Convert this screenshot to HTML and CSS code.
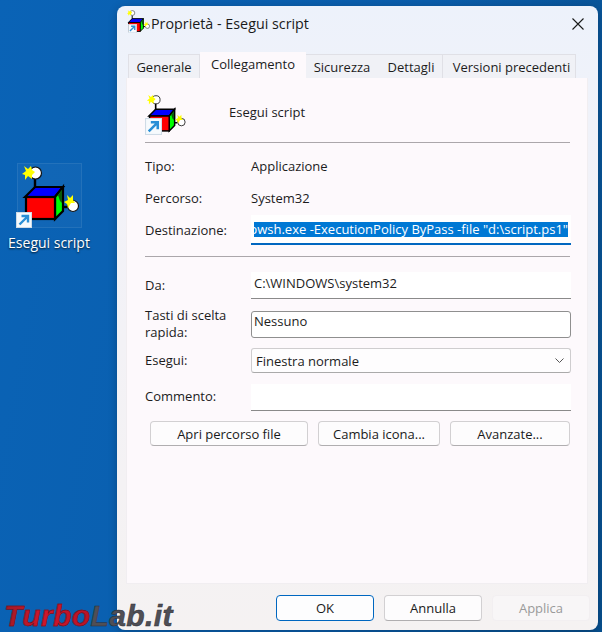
FILE: index.html
```html
<!DOCTYPE html>
<html lang="it">
<head>
<meta charset="utf-8">
<title>Proprietà - Esegui script</title>
<link rel="stylesheet" href="styles.css">
</head>
<body>
<svg class="defs" aria-hidden="true">
  <symbol id="cube" viewBox="0 0 65 65">
    <path d="M18 16V25" stroke="#000" stroke-width="2.4"/>
    <path d="M38 44H50" stroke="#000" stroke-width="2.4"/>
    <polygon points="8,34 18,24 46,24 38,34" fill="#0000ff" stroke="#000" stroke-width="2.2"/>
    <polygon points="38,34 46,24 46,48 38,56" fill="#00ff00" stroke="#000" stroke-width="2.2"/>
    <path d="M41 32L45 27V40L43 38Z" fill="#0a5a0a"/>
    <rect x="9" y="34" width="29" height="22" fill="#ff0000" stroke="#000" stroke-width="2.2"/>
    <circle cx="18.5" cy="10" r="6" fill="#fff" stroke="#111" stroke-width="1.2"/>
    <circle cx="56" cy="43" r="5.5" fill="#fff" stroke="#111" stroke-width="1.2"/>
    <polygon points="7,3 11,6 14,3 15,7 18,9 15,12 15,16 11,13 8,17 8,12 5,11 9,8" fill="#ffff00"/>
    <polygon points="50,32 53,35 56,32 56,37 58,40 54,40 51,45 50,41 47,39 51,37" fill="#ffff00"/>
  </symbol>
  <symbol id="overlay" viewBox="0 0 16 16">
    <rect x="0.5" y="0.5" width="15" height="15" fill="#f6fafd" stroke="#cfdbe6"/>
    <path d="M3.5 12.5L11.5 4.5M5.5 4H12V10.5" fill="none" stroke="#2a8fd6" stroke-width="2.4"/>
  </symbol>
</svg>

<main class="desktop">
  <div class="shortcut">
    <div class="shortcut-frame">
      <svg class="shortcut-icon" viewBox="0 0 65 65">
        <use href="#cube" width="65" height="65"/>
        <use href="#overlay" x="-1" y="49" width="16" height="16"/>
      </svg>
    </div>
    <span class="shortcut-label">Esegui script</span>
  </div>

  <section class="window">
    <header class="titlebar">
      <svg class="title-icon" viewBox="0 0 20 20">
        <use href="#cube" x="-3" y="-5" width="26" height="26"/>
        <use href="#overlay" x="0" y="10" width="9" height="9"/>
      </svg>
      <h1 class="title">Proprietà - Esegui script</h1>
      <svg class="close" viewBox="0 0 12 12"><path d="M0.5 0.5L11.5 11.5M11.5 0.5L0.5 11.5" stroke="#1a1a1a" stroke-width="1.1" fill="none"/></svg>
    </header>

    <nav class="tabs">
      <span class="tab tab-gen">Generale</span>
      <span class="tab tab-active">Collegamento</span>
      <span class="tab tab-sic">Sicurezza</span>
      <span class="tab tab-det">Dettagli</span>
      <span class="tab tab-ver">Versioni precedenti</span>
    </nav>

    <div class="panel">
      <div class="head">
        <svg class="head-icon" viewBox="0 0 40 40">
          <use href="#cube" x="-1.5" y="-1" width="44" height="44"/>
          <use href="#overlay" x="0" y="24" width="17" height="17"/>
        </svg>
        <span class="head-name">Esegui script</span>
      </div>
      <hr class="sep sep-a">
      <div class="row row-info"><span>Tipo:</span><span>Applicazione</span></div>
      <div class="row row-info row-gap"><span>Percorso:</span><span>System32</span></div>
      <div class="row row-dest">
        <span>Destinazione:</span>
        <div class="field field-focus"><div class="clip"><span class="selection">pwsh.exe -ExecutionPolicy ByPass -file "d:\script.ps1"</span></div></div>
      </div>
      <hr class="sep sep-b">
      <div class="row row-da"><span class="label-up">Da:</span><div class="field">C:\WINDOWS\system32</div></div>
      <div class="row row-keys"><span>Tasti di scelta rapida:</span><div class="field field-box">Nessuno</div></div>
      <div class="row row-run">
        <span class="label-up">Esegui:</span>
        <div class="combo"><span>Finestra normale</span>
          <svg class="chevron" viewBox="0 0 9 5"><path d="M0.5 0.5L4.5 4.5L8.5 0.5" fill="none" stroke="#555"/></svg>
        </div>
      </div>
      <div class="row row-com"><span class="label-up2">Commento:</span><div class="field"></div></div>
      <div class="actions">
        <button class="btn">Apri percorso file</button>
        <button class="btn">Cambia icona...</button>
        <button class="btn">Avanzate...</button>
      </div>
    </div>

    <footer class="footer">
      <button class="btn btn-foot btn-primary">OK</button>
      <button class="btn btn-foot">Annulla</button>
      <button class="btn btn-foot btn-disabled">Applica</button>
    </footer>
  </section>

  <div class="watermark"><span class="wm-red">Turbo</span><span class="wm-grey">Lab.it</span></div>
</main>
</body>
</html>
```
FILE: styles.css
```css
* { box-sizing: border-box; }
html, body { margin: 0; padding: 0; }
body { font-family: "Open Sans", "Noto Sans", sans-serif; font-size: 13px; color: #1c1c1c; }
.defs { position: absolute; width: 0; height: 0; }

.desktop {
  position: relative;
  width: 602px;
  height: 632px;
  overflow: hidden;
  background: linear-gradient(100deg, #0a63b6 0%, #0a5dab 60%, #07508f 100%);
}

.shortcut {
  position: absolute;
  left: 0;
  top: 163px;
  width: 98px;
  display: flex;
  flex-direction: column;
  align-items: center;
}
.shortcut-frame {
  width: 65px;
  height: 65px;
  margin-left: 1px;
  background: rgba(255,255,255,.03);
  border: 1px solid rgba(255,255,255,.08);
}
.shortcut-icon { display: block; width: 65px; height: 65px; margin: -1px; overflow: visible; }
.shortcut-label {
  margin-top: 5px;
  color: #fff;
  font-size: 14px;
  line-height: 20px;
  text-shadow: 0 1px 2px rgba(0,0,0,.8);
  white-space: nowrap;
}

.window {
  position: absolute;
  left: 117px;
  top: 6px;
  width: 481px;
  height: 624px;
  border-radius: 8px;
  display: flex;
  flex-direction: column;
  background: linear-gradient(180deg, #edf2fb 0%, #f2f2f8 30%, #f5f2f2 100%);
  box-shadow: 0 2px 8px rgba(0,0,0,.25);
}

.titlebar { height: 46px; flex: none; display: flex; align-items: center; padding: 0 14px 10px 11px; }
.title-icon { width: 20px; height: 20px; overflow: visible; flex: none; }
.title { margin: 0 0 0 3px; font-size: 14.3px; font-weight: 400; line-height: 20px; flex: 1; color: #1a1a1a; }
.close { width: 12px; height: 12px; flex: none; }

.tabs { height: 26px; flex: none; display: flex; align-items: flex-end; margin-left: 11px; }
.tab {
  height: 24px;
  line-height: 24px;
  text-align: center;
  background: #f0f1f6;
  border: 1px solid #e0e0e6;
  border-bottom: 0;
  border-left-color: transparent;
  white-space: nowrap;
}
.tab-gen { width: 72px; border-left-color: #e0e0e6; }
.tab-active {
  width: 106px;
  height: 27px;
  line-height: 25px;
  background: #fdf9fc;
  border: 0;
  position: relative;
  z-index: 1;
  margin-bottom: -1px;
}
.tab-sic { width: 72px; border-left: 0; border-right: 0; }
.tab-det { width: 65px; border-left: 0; padding-left: 2px; }
.tab-ver { width: 133px; border-left: 0; padding-left: 5px; }

.panel {
  flex: none;
  height: 506px;
  margin: 0 10px 0 9px;
  padding: 14px 16px 0 18px;
  background: #fdf9fc;
  border: 1px solid #f1eef1;
  border-top: 0;
}

.head { height: 43px; display: flex; align-items: center; }
.head-icon { width: 40px; height: 40px; overflow: visible; flex: none; margin-right: 44px; }
.head-name { margin-top: -3px; }

.sep { margin: 0 1px 0 0; height: 1px; border: 0; background: #aba7ab; }
.sep-a { margin-top: 7px; }
.sep-b { margin-top: 11px; }

.row { display: grid; grid-template-columns: 106px 1fr; align-items: center; }
.row-info { height: 22px; margin-top: 12px; }
.row-gap { margin-top: 10px; }
.row-dest { height: 30px; margin-top: 6px; }
.row-da { height: 27px; margin-top: 15px; }
.row-keys { height: 34px; margin-top: 8px; line-height: 17px; }
.row-run { height: 25px; margin-top: 7px; }
.row-com { height: 27px; margin-top: 11px; }
.label-up { margin-top: -2px; }
.label-up2 { margin-top: -4px; }

.field {
  height: 27px;
  padding: 0 3px;
  line-height: 22px;
  background: #fff;
  border-bottom: 1px solid #8a8a8a;
  white-space: nowrap;
  overflow: hidden;
}
.field-focus {
  height: 30px;
  padding: 7px 3px 0 3px;
  line-height: 15px;
  border-bottom: 2px solid #0067c0;
}
.clip { display: flex; justify-content: flex-end; overflow: hidden; }
.selection { flex: none; height: 15px; background: #0078d4; color: #fff; }
.field-box { border: 1px solid #8f8f8f; border-radius: 3px; padding: 0 2px; line-height: 18px; }

.combo {
  height: 25px;
  display: flex;
  align-items: center;
  justify-content: space-between;
  padding: 0 6px 0 4px;
  background: #fefdfe;
  border: 1px solid #cfcdcf;
  border-bottom-color: #aaa;
  border-radius: 3px;
}
.chevron { width: 9px; height: 5px; }

.actions { display: grid; grid-template-columns: 158px 122px 120px; column-gap: 10px; margin: 10px 0 0 5px; }

.btn {
  height: 25px;
  padding: 0;
  font: inherit;
  color: #1a1a1a;
  background: #fdfcfd;
  border: 1px solid #d2d0d2;
  border-bottom-color: #b0aeb0;
  border-radius: 4px;
}

.footer { flex: 1; display: flex; justify-content: flex-end; gap: 10px; padding: 11px 8px 0 0; }
.btn-foot { width: 98px; height: 26px; }
.btn-primary { border: 1.5px solid #0067c0; background: #fdfdfe; }
.btn-disabled { color: #9a9a9a; background: #f8f6f7; border-color: #f2eff1; }

.watermark {
  position: absolute;
  left: 4px;
  top: 601px;
  font-family: "Liberation Sans", sans-serif;
  font-size: 30px;
  font-weight: 700;
  font-style: italic;
  line-height: 30px;
  letter-spacing: 0.4px;
  white-space: nowrap;
}
.wm-red {
  color: transparent;
  background: linear-gradient(90deg, #a11a26 0%, #d0162b 45%, #b81226 100%);
  -webkit-background-clip: text;
  background-clip: text;
  -webkit-text-stroke: 0.5px #5a1018;
}
.wm-grey { color: #4f4f56; -webkit-text-stroke: 0.5px #2e2e34; }
```
